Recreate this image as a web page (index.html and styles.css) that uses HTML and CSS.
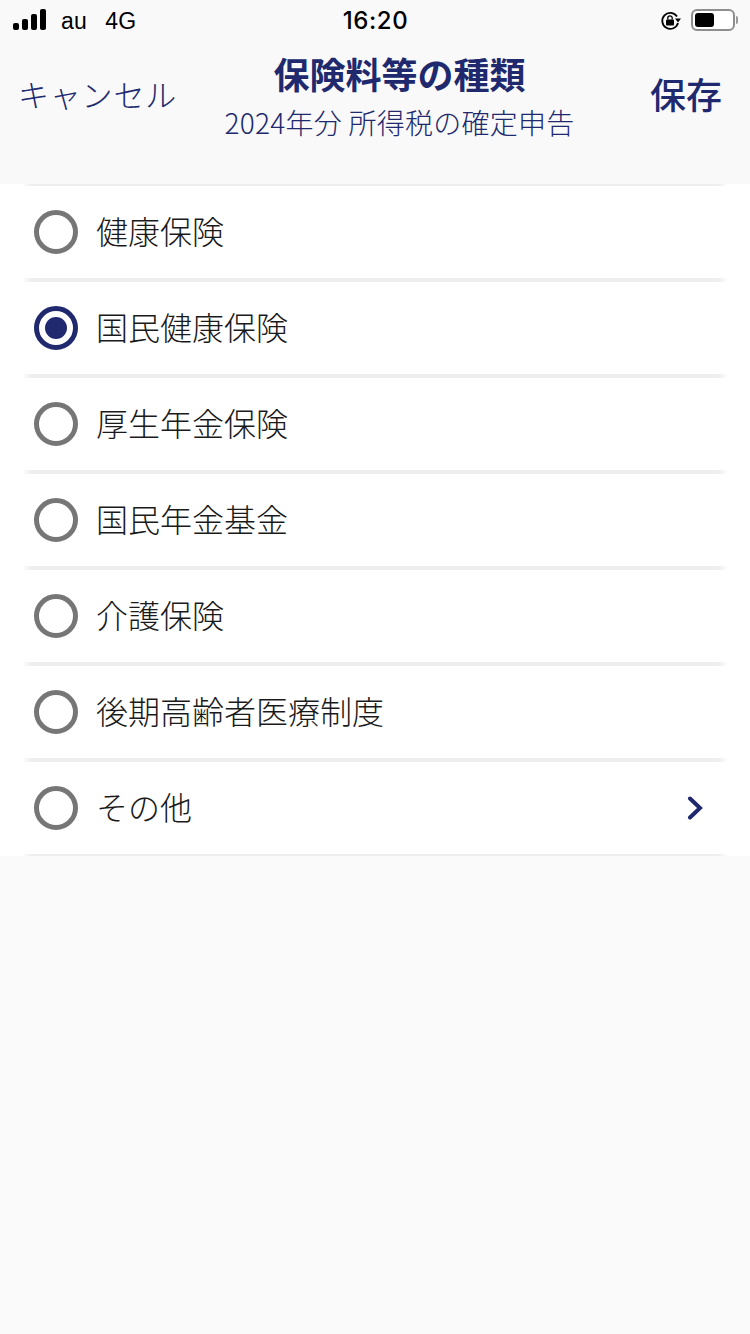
FILE: index.html
```html
<!DOCTYPE html>
<html lang="ja">
<head>
<meta charset="utf-8">
<title>保険料等の種類</title>
<link rel="stylesheet" href="styles.css">
</head>
<body>
<header class="head">
  <div class="status">
    <div class="status-left">
      <svg class="signal" width="34" height="22" viewBox="0 0 34 22"><rect x="0" y="14" width="6" height="7" rx="2"/><rect x="9" y="10" width="6" height="11" rx="2"/><rect x="18" y="5" width="6" height="16" rx="2"/><rect x="27" y="0" width="6" height="21" rx="2"/></svg>
      <span class="carrier">au</span>
      <span class="carrier net">4G</span>
    </div>
    <div class="clock">16:20</div>
    <div class="status-right">
      <svg class="lock" width="22" height="20" viewBox="0 0 22 20"><path d="M17 5.5A8 8 0 1 0 18 12" fill="none" stroke="#000" stroke-width="1.8"/><path d="M15 7.5h6l-3 4z" fill="#000"/><rect x="6" y="8.5" width="8" height="6" rx="1" fill="#000"/><path d="M7.8 8.5V7a2.2 2.2 0 0 1 4.4 0v1.5" fill="none" stroke="#000" stroke-width="1.3"/></svg>
      <div class="battery"><div class="charge"></div></div>
      <div class="cap"></div>
    </div>
  </div>
  <nav class="nav">
    <a class="cancel">キャンセル</a>
    <div class="titles">
      <h1 class="title">保険料等の種類</h1>
      <p class="sub">2024年分 所得税の確定申告</p>
    </div>
    <a class="save">保存</a>
  </nav>
</header>
<ul class="list">
  <li class="row"><span class="radio"></span><span class="label">健康保険</span></li>
  <li class="row"><span class="radio on"></span><span class="label">国民健康保険</span></li>
  <li class="row"><span class="radio"></span><span class="label">厚生年金保険</span></li>
  <li class="row"><span class="radio"></span><span class="label">国民年金基金</span></li>
  <li class="row"><span class="radio"></span><span class="label">介護保険</span></li>
  <li class="row"><span class="radio"></span><span class="label">後期高齢者医療制度</span></li>
  <li class="row"><span class="radio"></span><span class="label">その他</span>
    <svg class="chev" width="16" height="24" viewBox="0 0 16 24"><path d="M3 2.5L13 12 3 21.5" fill="none" stroke="#20296e" stroke-width="4" stroke-linecap="round" stroke-linejoin="miter"/></svg>
  </li>
</ul>
</body>
</html>
```
FILE: styles.css
```css
* { box-sizing: border-box; }
html, body { margin: 0; padding: 0; }
body {
  width: 750px;
  height: 1334px;
  overflow: hidden;
  background: #fafafa;
  font-family: "Noto Sans CJK JP", "Noto Sans", sans-serif;
}
.head { height: 184px; background: #f9f9f9; }
.status {
  height: 40px;
  display: grid;
  grid-template-columns: 1fr auto 1fr;
  align-items: center;
  padding: 0 12px 0 13px;
  color: #000;
}
.status-left { display: flex; align-items: center; }
.signal { display: block; margin-right: 14px; margin-bottom: 1px; }
.carrier { font: 23px/30px "Liberation Sans", sans-serif; letter-spacing: 0.3px; margin-top: 2px; }
.net { margin-left: 18px; }
.clock { font: 500 24px/30px Inter, sans-serif; letter-spacing: 0.6px; margin-top: 2px; }
.status-right { display: flex; align-items: center; justify-content: flex-end; }
.lock { display: block; margin-right: 9px; margin-top: 1px; }
.battery {
  width: 44px;
  height: 22px;
  border: 2px solid #8e8e8e;
  border-radius: 6px;
  padding: 2px;
  background: #fff;
}
.charge { width: 19px; height: 14px; background: #000; border-radius: 3px; }
.cap { width: 2px; height: 8px; margin-left: 1px; background: #9a9a9a; border-radius: 0 2px 2px 0; }
.nav {
  display: flex;
  align-items: flex-start;
  justify-content: space-between;
  padding: 0 28px 0 18px;
  color: #20296e;
}
.cancel { font-size: 31px; line-height: 44px; margin-top: 32px; font-weight: 300; letter-spacing: 0.8px; }
.save { font-size: 36px; line-height: 50px; margin-top: 28px; font-weight: 500; }
.titles { text-align: center; margin-top: 10px; margin-right: 28px; flex: none; }
.title { margin: 0; font-size: 36px; line-height: 46px; font-weight: 700; white-space: nowrap; }
.sub { margin: 7px 0 0; font-size: 28px; line-height: 38px; font-weight: 300; letter-spacing: 0.25px; white-space: nowrap; }
.list { margin: 0; padding: 0; list-style: none; background: #fff; }
.row {
  height: 96px;
  position: relative;
  display: flex;
  align-items: center;
  padding: 0 47px 0 34px;
  color: #1a1a1a;
}
.row::before, .row::after {
  content: "";
  position: absolute;
  left: 24px;
  right: 24px;
  height: 2px;
  background: linear-gradient(90deg, #fafafa, #eeeeee 8px, #eeeeee calc(100% - 8px), #fafafa);
}
.row::before { top: 0; }
.row::after { bottom: 0; }
.radio {
  width: 44px;
  height: 44px;
  border: 5px solid #767676;
  border-radius: 50%;
  flex: none;
  display: flex;
  align-items: center;
  justify-content: center;
}
.radio.on { border-color: #20296e; }
.radio.on::after {
  content: "";
  width: 22px;
  height: 22px;
  border-radius: 50%;
  background: #20296e;
}
.label { margin: -4px 0 0 18px; font-size: 32px; line-height: 44px; font-weight: 300; flex: 1; }
.chev { display: block; flex: none; }
```
